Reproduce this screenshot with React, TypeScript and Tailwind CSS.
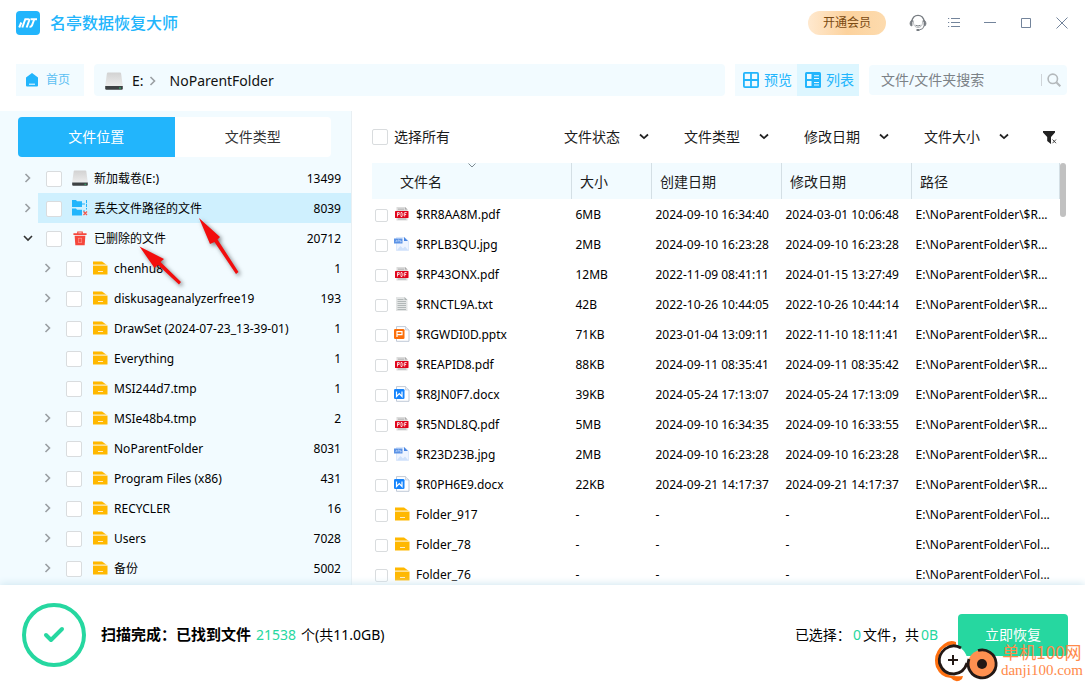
import React from "react";
import { Check } from "lucide-react";

type IconProps = { className?: string };

const Disk = ({ className }: IconProps) => (
  <svg viewBox="0 0 18 18" className={className} aria-hidden="true">
    <defs>
      <linearGradient id="disk" x1="0" y1="0" x2="0" y2="1">
        <stop offset="0" stopColor="#d2d2d2" />
        <stop offset="1" stopColor="#ececec" />
      </linearGradient>
    </defs>
    <path d="M3 0.5h12q1 0 1.1 1L17.8 14H0.2L1.9 1.5q.1-1 1.1-1z" fill="url(#disk)" />
    <path d="M0.2 14h17.6v2.6q0 1.2-1.2 1.2H1.4q-1.2 0-1.2-1.2z" fill="#3d4143" />
    <rect x="14" y="15.5" width="2" height="1" fill="#2fbf71" />
  </svg>
);

const Folder = ({ className }: IconProps) => (
  <svg viewBox="0 0 16 14" className={className} aria-hidden="true">
    <path d="M1 0.500h9l4.500 3.300H1z" fill="#ffb800" />
    <path d="M1 4.500h14.500v9H1z" fill="#ffb800" />
    <path d="M1 4.100h14" stroke="#ffe7a8" strokeWidth="0.8" />
    <path d="M6 10.500h5" stroke="#ffeec2" strokeWidth="1" />
  </svg>
);

const LostFolder = ({ className }: IconProps) => (
  <svg viewBox="0 0 16 16" className={className} aria-hidden="true">
    <path d="M0 0h4l1 1.2h5V7H0zM0 8.5h4l1 1.2h5v5.8H0z" fill="#22b5fc" />
    <path d="M10 4h4.5M14.5 0v9.5M11 11h2" stroke="#22b5fc" strokeWidth="1" strokeDasharray="3 1" fill="none" />
    <path d="M11.5 11.5l3.5 3.5M15 11.5L11.500 15" stroke="#f5574d" strokeWidth="1.2" />
  </svg>
);

const Trash = ({ className }: IconProps) => (
  <svg viewBox="0 0 14 16" className={className} aria-hidden="true">
    <path d="M0 2.300h4V.5h6v1.800h4v2H0zM5.200 1.500v.8h3.600v-.8z" fill="#f5473c" fillRule="evenodd" />
    <path d="M1.300 5h11.400l-.7 10.300H2z" fill="#f5473c" />
    <path d="M5.500 7.500v5M8.500 7.500v5M5 7.800h4M5 12.300h4" stroke="#ff9a92" strokeWidth="0.700" />
  </svg>
);

const FileIcon = ({ kind }: { kind: string }) => {
  if (kind === "folder") return <Folder className="h-[14px] w-4 shrink-0" />;
  if (kind === "pdf")
    return (
      <svg viewBox="0 0 16 16" className="size-4 shrink-0" aria-hidden="true">
        <path d="M2.500 1h8.500l2.500 2.500V14.500h-11z" fill="#dcdcdc" />
        <path d="M11 1v2.500h2.500" fill="#aaa" />
        <path d="M4 3.200h6M4 13h8" stroke="#aaa" strokeWidth="0.8" />
        <rect x="1" y="5" width="13.500" height="7" rx="0.600" fill="#e0061d" />
        <path d="M3.500 10.500v-4h1.700v2H3.500M7 6.500v4h1l.8-.8V7.300L8 6.500zM10.700 10.500v-4h2M10.700 8.500h1.500" fill="none" stroke="#fff" strokeWidth="0.800" />
      </svg>
    );
  if (kind === "jpg")
    return (
      <svg viewBox="0 0 16 16" className="size-4 shrink-0" aria-hidden="true">
        <path d="M2.500 1.500h8L14.500 5v9.500h-12z" fill="#eef4ff" stroke="#c9dcfa" strokeWidth="0.600" />
        <path d="M10 1v4h4z" fill="#4a86e0" />
        <rect x="0" y="2.500" width="8.500" height="5" fill="#5c93e6" />
        <path d="M1.500 5.500h1V4M4 6V4h1.200v1M6.200 4v2h1V5" stroke="#cfe0fa" strokeWidth="0.600" fill="none" />
        <path d="M3 14l3.500-4 2.500 2.500 2-2 3 3.500z" fill="#cfe1fb" />
      </svg>
    );
  if (kind === "txt")
    return (
      <svg viewBox="0 0 16 16" className="size-4 shrink-0" aria-hidden="true">
        <path d="M2 1h8.500L13.500 4v11H2z" fill="#e3e5e5" />
        <path d="M10.500 1v3h3" fill="#aeb4b4" />
        <path d="M3.500 3.500h6M3.500 5.500h8.500M3.500 7.500h8.500M3.500 9.500h8.500M3.500 11.500h8.500M3.500 13.500h8.500" stroke="#abb1b1" strokeWidth="0.900" />
      </svg>
    );
  const doc = kind === "docx";
  return (
    <svg viewBox="0 0 16 16" className="size-4 shrink-0" aria-hidden="true">
      <path d="M2.500.6h9L15 4v11.300H2.500z" fill="#fff" stroke="#b9c3d2" strokeWidth="0.900" />
      <path d="M11.500.6V4H15" fill="#e7ecf3" stroke="#b9c3d2" strokeWidth="0.600" />
      <rect x="0" y="3" width="10.500" height="10" rx="1.300" fill={doc ? "#1684fc" : "#fb6f0a"} />
      {doc ? (
        <path d="M2.500 5.500v5l2.800-2.800 2.700 2.800v-5" fill="none" stroke="#fff" strokeWidth="1.200" />
      ) : (
        <path d="M3 11V5.600h5v3H3.500" fill="none" stroke="#fff" strokeWidth="1.200" />
      )}
    </svg>
  );
};

const Chevron = ({ open }: { open?: boolean }) => (
  <svg viewBox="0 0 10 10" className="size-[10px]" fill="none" aria-hidden="true">
    <path d={open ? "M1 3l4 4 4-4" : "M2.500 1l4 4-4 4"} stroke={open ? "#333" : "#9a9fa3"} strokeWidth="1.600" />
  </svg>
);

const boxStyle =
  "shrink-0 appearance-none rounded-[2px] border border-[#d9dcde] bg-white checked:border-[#22b5fc] checked:bg-[#22b5fc]";

const tree = [
  { name: "新加载卷(E:)", count: 13499, icon: "disk", level: 0, expand: "closed" },
  { name: "丢失文件路径的文件", count: 8039, icon: "lost", level: 0, expand: "closed" },
  { name: "已删除的文件", count: 20712, icon: "trash", level: 0, expand: "open" },
  { name: "chenhu8", count: 1, icon: "folder", level: 1, expand: "closed" },
  { name: "diskusageanalyzerfree19", count: 193, icon: "folder", level: 1, expand: "closed" },
  { name: "DrawSet (2024-07-23_13-39-01)", count: 1, icon: "folder", level: 1, expand: "closed" },
  { name: "Everything", count: 1, icon: "folder", level: 1, expand: "" },
  { name: "MSI244d7.tmp", count: 1, icon: "folder", level: 1, expand: "" },
  { name: "MSIe48b4.tmp", count: 2, icon: "folder", level: 1, expand: "closed" },
  { name: "NoParentFolder", count: 8031, icon: "folder", level: 1, expand: "closed" },
  { name: "Program Files (x86)", count: 431, icon: "folder", level: 1, expand: "closed" },
  { name: "RECYCLER", count: 16, icon: "folder", level: 1, expand: "closed" },
  { name: "Users", count: 7028, icon: "folder", level: 1, expand: "closed" },
  { name: "备份", count: 5002, icon: "folder", level: 1, expand: "closed" },
];

const files = [
  ["$RR8AA8M.pdf", "6MB", "2024-09-10 16:34:40", "2024-03-01 10:06:48"],
  ["$RPLB3QU.jpg", "2MB", "2024-09-10 16:23:28", "2024-09-10 16:23:28"],
  ["$RP43ONX.pdf", "12MB", "2022-11-09 08:41:11", "2024-01-15 13:27:49"],
  ["$RNCTL9A.txt", "42B", "2022-10-26 10:44:05", "2022-10-26 10:44:14"],
  ["$RGWDI0D.pptx", "71KB", "2023-01-04 13:09:11", "2022-11-10 18:11:41"],
  ["$REAPID8.pdf", "88KB", "2024-09-11 08:35:41", "2024-09-11 08:35:42"],
  ["$R8JN0F7.docx", "39KB", "2024-05-24 17:13:07", "2024-05-24 17:13:09"],
  ["$R5NDL8Q.pdf", "5MB", "2024-09-10 16:34:35", "2024-09-10 16:33:55"],
  ["$R23D23B.jpg", "2MB", "2024-09-10 16:23:28", "2024-09-10 16:23:28"],
  ["$R0PH6E9.docx", "22KB", "2024-09-21 14:17:37", "2024-09-21 14:17:37"],
  ["Folder_917", "-", "-", "-"],
  ["Folder_78", "-", "-", "-"],
  ["Folder_76", "-", "-", "-"],
];

const TreeIcon = ({ icon }: { icon: string }) => {
  if (icon === "disk") return <Disk className="h-4 w-4" />;
  if (icon === "lost") return <LostFolder className="size-4" />;
  if (icon === "trash") return <Trash className="h-[15px] w-[14px]" />;
  return <Folder className="h-[14px] w-4" />;
};

function TitleBar() {
  const control = "flex h-9 w-9 items-center justify-center text-[#73849b]";
  return (
    <header className="flex h-[46px] shrink-0 items-center pr-[5px] pl-4">
      <svg viewBox="0 0 24 24" className="size-6" aria-hidden="true">
        <rect width="24" height="24" rx="4" fill="#22b5fc" />
        <g fill="none" stroke="#fff" strokeWidth="2">
          <path d="M5.300 11.500L3.200 16.500M6.300 16.500L9.300 8.200H12.200Q13.600 8.200 13 10L10.600 16.500" />
          <path d="M14.500 8.300H21M18.200 8.500L15.900 14.500Q15.200 16 13.500 15.600" />
        </g>
      </svg>
      <h1 className="ml-[10px] text-base font-medium text-[#22b5fc]">名亭数据恢复大师</h1>
      <button className="mr-[14px] ml-auto h-6 w-[78px] rounded-full bg-linear-to-r from-[#ffe9cf] via-[#fcd29d] to-[#fddbae] text-xs text-[#7a4a12]">
        开通会员
      </button>
      <button aria-label="客服" className={control}>
        <svg viewBox="0 0 18 18" className="size-[18px]" fill="none" stroke="#777c82" aria-hidden="true">
          <path d="M3 8C2.600-.8 15.400-.8 15 8" strokeWidth="1.300" />
          <path d="M4.600 6.500C4 11 6 13.500 9 13.500s5-2.500 4.400-7" strokeWidth="0.500" />
          <path d="M3 6v6Q1 12 1 9.500T3 6zM15 6v6q2 0 2-2.500T15 6z" fill="#777c82" strokeWidth="0.800" />
          <path d="M6.500 11.300q2.500 1.400 5 0M15 12q-.5 3.500-4.500 3.800" strokeWidth="1" />
          <path d="M7.500 16h3" strokeWidth="2" />
        </svg>
      </button>
      <button aria-label="菜单" className={control}>
        <svg viewBox="0 0 14 12" className="h-3 w-[14px]" stroke="currentColor" aria-hidden="true">
          <path d="M1 1.500h1.200M4 1.500h9M1 5.500h1.200M4 5.500h9M1 9.500h1.200M4 9.500h9" />
        </svg>
      </button>
      <button aria-label="最小化" className={control}>
        <svg viewBox="0 0 12 12" className="size-3" stroke="currentColor" aria-hidden="true">
          <path d="M0 5.500h12" />
        </svg>
      </button>
      <button aria-label="最大化" className={control}>
        <svg viewBox="0 0 10 10" className="size-[10px]" fill="none" stroke="currentColor" aria-hidden="true">
          <path d="M.5.5h9v9h-9z" />
        </svg>
      </button>
      <button aria-label="关闭" className={control}>
        <svg viewBox="0 0 12 12" className="size-3" stroke="currentColor" aria-hidden="true">
          <path d="M.5.5l11 11M11.500.5l-11 11" />
        </svg>
      </button>
    </header>
  );
}

function Toolbar() {
  return (
    <nav className="mt-[18px] mb-[15px] flex h-8 shrink-0 items-stretch gap-[10px] pr-[18px] pl-4">
      <button className="flex w-[68px] items-center gap-2 bg-[#f2fbff] pl-[10px] text-xs text-[#5cc0f3]">
        <svg viewBox="0 0 12 14" className="h-[14px] w-3" aria-hidden="true">
          <path d="M6 0l6 4.500V12.500q0 1-1 1H1q-1 0-1-1V4.500z" fill="#22b5fc" />
          <path d="M3 11.200h6" stroke="#fff" />
        </svg>
        首页
      </button>
      <div className="flex flex-1 items-center rounded bg-[#f2fbff] pt-px pl-[11px] text-sm text-[#111]">
        <Disk className="h-[18px] w-[18px]" />
        <span className="ml-[9px]">E:</span>
        <span className="mr-3 ml-1">
          <Chevron />
        </span>
        <span>NoParentFolder</span>
      </div>
      <div className="flex text-sm text-[#22b5fc]">
        <button className="flex w-[62px] items-center gap-[5px] bg-[#f2fbff] pl-2">
          <svg viewBox="0 0 16 16" className="size-4" fill="none" stroke="currentColor" strokeWidth="1.800" aria-hidden="true">
            <rect x=".9" y=".9" width="14.200" height="14.200" rx="1" />
            <path d="M8 1v14M1 8h14" />
          </svg>
          预览
        </button>
        <button aria-pressed="true" className="flex w-[62px] items-center gap-[5px] bg-[#ddf6ff] pl-2">
          <svg viewBox="0 0 16 16" className="size-4" aria-hidden="true">
            <rect width="16" height="16" rx="1.500" fill="#22b5fc" />
            <path d="M2 2h4.500v5H2zM2 9h4.500v5H2zM9 3.300h5v1H9zM9 6h5v1H9zM9 10h5v1H9zM9 12.600h5v1H9z" fill="#e9f9ff" />
          </svg>
          列表
        </button>
      </div>
      <label className="flex h-[30px] w-[198px] items-center self-center rounded bg-[#f2fbff] pl-3 text-sm">
        <input
          aria-label="搜索"
          placeholder="文件/文件夹搜索"
          className="min-w-0 flex-1 bg-transparent outline-none placeholder:text-[#7c8287]"
        />
        <span className="h-3 w-px bg-[#cfd4d8]" />
        <svg viewBox="0 0 14 14" className="mr-[6px] ml-[5px] size-[14px]" fill="none" stroke="#b4b9bc" strokeWidth="1.600" aria-hidden="true">
          <circle cx="5.800" cy="5.800" r="4.700" />
          <path d="M9.300 9.300L13.300 13.300" strokeWidth="2" />
        </svg>
      </label>
    </nav>
  );
}

function Sidebar() {
  return (
    <aside className="flex w-[352px] shrink-0 flex-col border-r border-[#e8eff3] bg-[#f2fbff] pt-[6px]">
      <div role="tablist" className="mr-5 ml-[18px] flex h-10 shrink-0 overflow-hidden rounded text-sm">
        <button role="tab" aria-selected="true" className="flex-1 bg-[#22b5fc] text-white">
          文件位置
        </button>
        <button role="tab" aria-selected="false" className="flex-1 bg-white text-[#333]">
          文件类型
        </button>
      </div>
      <ul className="mt-[6px] text-xs text-black">
        {tree.map((n) => (
          <li key={n.name} className={n.level ? "flex h-[30px] pl-10" : "flex h-[30px] pl-5"}>
            <span className="flex w-[18px] shrink-0 items-center justify-center pr-[2px]">
              {n.expand && (
                <button aria-label={n.name} className="block">
                  <Chevron open={n.expand === "open"} />
                </button>
              )}
            </span>
            <label
              className={
                n.icon === "lost"
                  ? "flex flex-1 items-center bg-[#cff0fe] pt-[2px] pr-[10px] pl-2"
                  : "flex flex-1 items-center pt-[2px] pr-[10px] pl-2"
              }
            >
              <input type="checkbox" className={boxStyle + " size-4"} />
              <span className="mr-[6px] ml-[10px] flex w-4 justify-center pb-[2px]">
                <TreeIcon icon={n.icon} />
              </span>
              <span>{n.name}</span>
              <span className="ml-auto">{n.count}</span>
            </label>
          </li>
        ))}
      </ul>
    </aside>
  );
}

function Filters() {
  return (
    <div className="flex h-[52px] shrink-0 items-center text-sm text-[#1c1c1c]">
      <label className="mr-auto flex items-center gap-[6px]">
        <input type="checkbox" className={boxStyle + " size-4"} />
        选择所有
      </label>
      {["文件状态", "文件类型", "修改日期", "文件大小"].map((f) => (
        <label key={f} className="grid w-[120px] grid-cols-[85px] items-center">
          <select aria-label={f} className="col-start-1 row-start-1 appearance-none bg-transparent outline-none">
            <option>{f}</option>
          </select>
          <svg viewBox="0 0 10 8" className="pointer-events-none col-start-1 row-start-1 h-2 w-[10px] justify-self-end" fill="none" aria-hidden="true">
            <path d="M1 1.500l4 3.600L9 1.500" stroke="#222" strokeWidth="1.800" />
          </svg>
        </label>
      ))}
      <button aria-label="清除筛选" className="mr-[28px] -ml-px">
        <svg viewBox="0 0 14 13" className="h-[13px] w-[14px]" aria-hidden="true">
          <path d="M0 0h12v1.500L8 6v7L4.200 10V6L0 1.500z" fill="#222" />
          <path d="M9.500 8.500l3.500 3.700M13 8.500l-3.500 3.700" stroke="#333" strokeWidth="0.900" />
        </svg>
      </button>
    </div>
  );
}

function FileTable() {
  const head = "border-r border-[#d4dfe5] pt-[2px] pl-2 text-left font-normal";
  return (
    <div className="flex min-h-0 items-start">
      <table className="w-full max-w-[calc(100%-25px)] table-fixed border-collapse text-xs text-black">
        <colgroup>
          <col />
          <col className="w-20" />
          <col className="w-[130px]" />
          <col className="w-[130px]" />
          <col className="w-[148px]" />
        </colgroup>
        <thead>
          <tr className="h-9 bg-[#f2fbff] text-sm text-[#1c1c1c]">
            <th className="relative border-r border-[#d4dfe5] pt-[2px] pl-7 text-left font-normal">
              文件名
              <svg viewBox="0 0 8 5" className="absolute top-0 left-1/2 h-[5px] w-2 -translate-x-1/2" fill="none" aria-hidden="true">
                <path d="M.5.5L4 4 7.500.5" stroke="#7f8a90" />
              </svg>
            </th>
            <th className={head}>大小</th>
            <th className={head}>创建日期</th>
            <th className={head}>修改日期</th>
            <th className={head}>路径</th>
          </tr>
        </thead>
        <tbody>
          {files.map(([name, size, created, modified]) => {
            const ext = name.split(".")[1];
            return (
              <tr key={name} className="h-[30px]">
                <td className="pt-[2px] pl-[3px]">
                  <label className="flex items-center">
                    <input type="checkbox" className={boxStyle + " size-[13px]"} />
                    <span className="mr-[6px] ml-[6px] pb-[2px]">
                      <FileIcon kind={ext || "folder"} />
                    </span>
                    {name}
                  </label>
                </td>
                <td className="pt-[2px] pl-1">{size}</td>
                <td className="pt-[2px] pl-1">{created}</td>
                <td className="pt-[2px] pl-1">{modified}</td>
                <td className="pt-[2px] pl-1 whitespace-nowrap">
                  {ext ? "E:\\NoParentFolder\\$R..." : "E:\\NoParentFolder\\Fol..."}
                </td>
              </tr>
            );
          })}
        </tbody>
      </table>
      <div className="h-[54px] w-[6px] rounded-full bg-[#c1c1c1]" />
    </div>
  );
}

function Footer() {
  return (
    <footer className="relative flex h-[97px] shrink-0 items-center bg-white pt-[3px] pr-[17px] pl-[22px] text-sm text-black shadow-[0_-1px_8px_#cfe6f0]">
      <div className="flex size-16 items-center justify-center rounded-full border-4 border-[#26d7a0] text-[#26d7a0]">
        <Check className="size-6" strokeWidth={4} />
      </div>
      <p className="ml-[15px] flex items-center gap-[5px]">
        <strong className="text-[15px]">扫描完成：已找到文件</strong>
        <span className="text-[#26d7a0]">21538</span>
        <span>个(共11.0GB)</span>
      </p>
      <p className="mr-5 ml-auto">
        已选择：<span className="mx-[2px] text-[#26d7a0]">0</span>文件，共<span className="ml-[2px] text-[#26d7a0]">0B</span>
      </p>
      <button className="h-[42px] w-[110px] rounded bg-[#26d7a0] text-white">立即恢复</button>
      <div className="absolute right-[2px] bottom-0 flex items-center gap-[2px] text-[#ff8a4a]">
        <svg viewBox="0 0 64 42" className="h-[42px] w-16" fill="none" aria-hidden="true">
          <path d="M21 2Q15-1 9 4Q-3 13 1 27Q6 38 16 38Q21 44 27 39L28 36Q13 38 6 29Q-1 13 12 6Q17 4 21 5z" fill="#ff7010" />
          <circle cx="18" cy="20" r="14" fill="#fff" />
          <path d="M26 8Q18 3 10 9Q3 15 4.500 23Q8 34 19 34Q29 33 32 23" stroke="#231815" strokeWidth="2.800" />
          <path d="M13 20h10M18 15v10" stroke="#231815" strokeWidth="2" />
          <circle cx="47" cy="24" r="14" fill="#ff9050" />
          <path d="M43 10.500A14 14 0 1 1 34 19" stroke="#231815" strokeWidth="2.800" />
          <circle cx="47" cy="24" r="5" fill="#231815" />
        </svg>
        <div className="text-center font-['Liberation_Serif','Noto_Sans_CJK_SC',serif]">
          <div className="font-['Noto_Sans_CJK_SC',sans-serif] text-[17px] leading-[18px]">单机100网</div>
          <div className="text-[15px] leading-[18px]">danji100.com</div>
        </div>
      </div>
    </footer>
  );
}

export default function App() {
  return (
    <div className="relative flex h-screen flex-col overflow-hidden bg-white font-['Noto_Sans','Noto_Sans_CJK_SC',sans-serif]">
      <TitleBar />
      <Toolbar />
      <main className="flex min-h-0 flex-1 overflow-hidden">
        <Sidebar />
        <section className="flex min-w-0 flex-1 flex-col pl-5">
          <Filters />
          <FileTable />
        </section>
      </main>
      <Footer />
      <svg
        viewBox="0 0 110 76"
        className="pointer-events-none absolute top-[214px] left-[136px] h-[76px] w-[110px] drop-shadow-[2px_2px_2px_rgba(0,0,0,0.5)]"
        aria-hidden="true"
      >
        <path d="M63 4L84 23L81.500 25.500L102.500 58L100 60L78.500 28L74 30z" fill="#f20d0d" />
        <path d="M3.500 32.500L28 45L24.500 48L45 68L43 70.500L22 51L18.500 54z" fill="#f20d0d" />
      </svg>
    </div>
  );
}
